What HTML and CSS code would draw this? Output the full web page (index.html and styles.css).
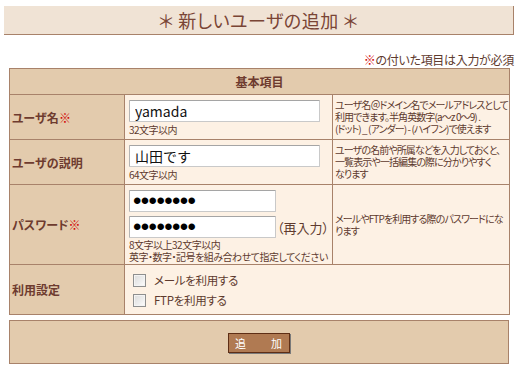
FILE: index.html
```html
<!DOCTYPE html>
<html lang="ja">
<head>
<meta charset="utf-8">
<title>新しいユーザの追加</title>
<link rel="stylesheet" href="styles.css">
</head>
<body>
<div class="page">
  <h1 class="title">＊ 新しいユーザの追加 ＊</h1>
  <p class="note"><span class="req">※</span>の付いた項目は入力が必須</p>
  <table class="form">
    <colgroup>
      <col class="c-label">
      <col class="c-input">
      <col class="c-desc">
    </colgroup>
    <tr class="r-head"><th colspan="3">基本項目</th></tr>
    <tr class="r1">
      <th class="label">ユーザ名<span class="req">※</span></th>
      <td class="val">
        <input class="txt" type="text" value="yamada">
        <div class="hint">32文字以内</div>
      </td>
      <td class="desc">ユーザ名＠ドメイン名でメールアドレスとして<br>利用できます。半角英数字(a～z 0～9) .<br>(ドット) _ (アンダー) - (ハイフン)で使えます</td>
    </tr>
    <tr class="r2">
      <th class="label">ユーザの説明</th>
      <td class="val">
        <input class="txt" type="text" value="山田です">
        <div class="hint">64文字以内</div>
      </td>
      <td class="desc">ユーザの名前や所属などを入力しておくと、<br>一覧表示や一括編集の際に分かりやすく<br>なります</td>
    </tr>
    <tr class="r3">
      <th class="label">パスワード<span class="req">※</span></th>
      <td class="val">
        <input class="pw" type="password" value="12345678">
        <div class="pwrow"><input class="pw" type="password" value="12345678"><span class="again">（再入力）</span></div>
        <div class="hint">8文字以上32文字以内<br>英字・数字・記号を組み合わせて指定してください</div>
      </td>
      <td class="desc">メールやFTPを利用する際のパスワードにな<br>ります</td>
    </tr>
    <tr class="r4">
      <th class="label">利用設定</th>
      <td class="val" colspan="2">
        <label class="chk"><span class="box"></span>メールを利用する</label>
        <label class="chk"><span class="box"></span>FTPを利用する</label>
      </td>
    </tr>
  </table>
  <div class="actions">
    <button class="btn" type="button">追　　加</button>
  </div>
</div>
</body>
</html>
```

FILE: styles.css
```css
html, body {
  margin: 0;
  padding: 0;
  background: #ffffff;
}
body {
  font-family: "Noto Sans CJK JP", "Noto Sans", sans-serif;
  font-feature-settings: "palt";
  color: #5e3a2e;
}
.page {
  padding: 6px 5px 0 4px;
  width: 510px;
}
.title {
  margin: 0;
  height: 28px;
  line-height: 28px;
  background: #f0e3d5;
  border-bottom: 1px solid #a8826a;
  border-right: 1px solid #a8826a;
  text-align: center;
  font-size: 18px;
  font-weight: normal;
  color: #7a4535;
  letter-spacing: 0.5px;
}
.note {
  margin: 17px 0 0 0;
  text-align: right;
  font-size: 12px;
  line-height: 15px;
  color: #5e3a2e;
  letter-spacing: -0.3px;
}
.req {
  color: #d10000;
}
.form {
  margin: 1px 0 0 5px;
  width: 500px;
  border-collapse: collapse;
  table-layout: fixed;
  border: 1px solid #a8826a;
}
.c-label { width: 115px; }
.c-input { width: 208px; }
.c-desc { width: 177px; }
.form th, .form td {
  border: 1px solid #a8826a;
  padding: 0;
}
.r-head th {
  height: 25px;
  background: #e3cbad;
  font-size: 12px;
  font-weight: bold;
  color: #6e3b2f;
  text-align: center;
}
.label {
  background: #e3cbad;
  text-align: left;
  padding-left: 2px !important;
  font-size: 12px;
  font-weight: bold;
  color: #6e3b2f;
  vertical-align: middle;
}
.val {
  background: #fdf1e4;
  vertical-align: top;
  padding: 5px 0 0 4px !important;
}
.desc {
  background: #fdf1e4;
  vertical-align: middle;
  padding-left: 2px !important;
  font-size: 10px;
  line-height: 12px;
  color: #5e3a2e;
  white-space: nowrap;
  letter-spacing: -0.9px;
}
.r1 { height: 45px; }
.r2 { height: 45px; }
.r3 { height: 80px; }
.r4 { height: 50px; }
.txt, .pw {
  display: block;
  box-sizing: border-box;
  height: 22px;
  margin: 0;
  padding: 0 5px;
  background: #ffffff;
  border: 1px solid #c9c9c9;
  border-top-color: #a5a5a5;
  border-left-color: #b5b5b5;
  border-radius: 1px;
  font-family: "Noto Sans CJK JP", sans-serif;
  font-size: 14px;
  color: #111111;
  outline: none;
}
.txt { width: 191px; }
.pw {
  width: 147px;
  padding: 0 0 0 3px;
  font-family: "Liberation Sans", sans-serif;
  font-size: 24px;
  letter-spacing: -0.6px;
  line-height: 20px;
  color: #000000;
}
.pwrow {
  display: flex;
  align-items: center;
  margin-top: 4px;
}
.again {
  margin-left: 1px;
  font-size: 13px;
  color: #5e3a2e;
  white-space: nowrap;
  letter-spacing: 0;
}
.hint {
  margin-top: 2px;
  font-size: 10px;
  line-height: 12px;
  color: #5e3a2e;
  white-space: nowrap;
  letter-spacing: -0.5px;
}
.r3 .hint {
  margin-top: 1px;
}
.r4 .val {
  padding: 5px 0 0 8px !important;
}
.chk {
  display: flex;
  align-items: center;
  height: 20px;
  font-size: 11.5px;
  color: #5e3a2e;
  letter-spacing: -0.3px;
}
.box {
  box-sizing: border-box;
  width: 13px;
  height: 13px;
  margin-right: 8px;
  border: 1px solid #8e8f8f;
  background: linear-gradient(135deg, #dcdcdc 0%, #eeeeee 60%, #ffffff 100%);
  box-shadow: inset 0 0 0 1px #f4f4f4;
}
.actions {
  margin: 5px 0 0 5px;
  width: 500px;
  height: 44px;
  box-sizing: border-box;
  border: 1px solid #a8826a;
  background: #e3cbad;
  display: flex;
  justify-content: center;
  align-items: center;
}
.btn {
  width: 62px;
  height: 20px;
  margin-top: 2px;
  padding: 0;
  background: #b07a52;
  border: 1px solid #5e2e15;
  box-shadow: 1px 1px 0 #7a7a7a;
  color: #ffffff;
  font-family: "Noto Sans CJK JP", sans-serif;
  font-size: 11px;
  letter-spacing: 1px;
}
```
